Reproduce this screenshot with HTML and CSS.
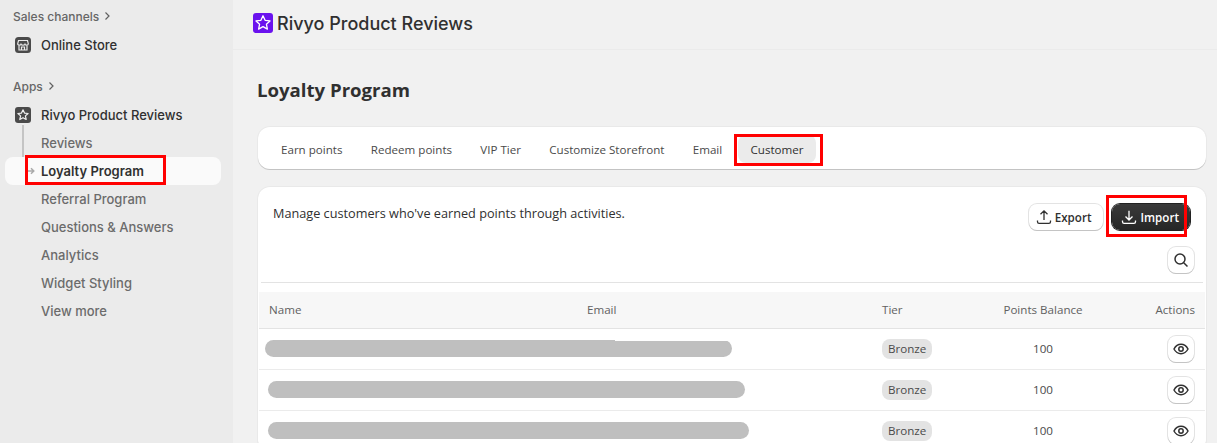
FILE: index.html
```html
<!DOCTYPE html>
<html lang="en">
<head>
    <meta charset="UTF-8">
    <title>Loyalty Program - Rivyo Product Reviews</title>
    <link rel="stylesheet" href="styles.css">
</head>
<body>
    <div class="app">
        <!-- Sidebar -->
        <nav class="sidebar">
            <div class="nav-label nav-label-first">Sales channels
                <svg class="chevron" viewBox="0 0 8 10"><path d="M2.500 1.500 6 5 2.500 8.500"/></svg>
            </div>
            <div class="nav-item nav-parent">
                <svg class="nav-icon" viewBox="0 0 16 16">
                    <rect width="16" height="16" rx="3.500" fill="#4a4a4a"/>
                    <path d="M3.500 3.500h9l.8 3.200c0 1-.9 1.500-1.700 1.500-.8 0-1.300-.4-1.600-1-.3.600-1.100 1-2 1s-1.700-.4-2-1c-.3.600-.8 1-1.600 1-.8 0-1.700-.5-1.700-1.500z" fill="none" stroke="#ebebeb" stroke-width="1.200"/>
                    <path d="M4 8.500V13h8V8.500M6.500 13v-3h3v3" fill="none" stroke="#ebebeb" stroke-width="1.200"/>
                </svg>
                Online Store
            </div>

            <div class="nav-label nav-label-apps">Apps
                <svg class="chevron" viewBox="0 0 8 10"><path d="M2.500 1.500 6 5 2.500 8.500"/></svg>
            </div>
            <div class="nav-item nav-parent">
                <svg class="nav-icon" viewBox="0 0 16 16">
                    <rect width="16" height="16" rx="3" fill="#4a4a4a"/>
                    <path d="M8 2.800l1.500 3.300 3.600.4-2.700 2.400.8 3.600L8 10.700l-3.200 1.800.8-3.600-2.700-2.400 3.600-.4z" fill="none" stroke="#f1f1f1" stroke-width="1.200" stroke-linejoin="round"/>
                </svg>
                Rivyo Product Reviews
            </div>
            <div class="nav-sub">
                <span class="tree-line"></span>
                <div class="nav-item">Reviews</div>
                <div class="nav-item nav-active">
                    <svg class="tree-arrow" viewBox="0 0 8 8"><path d="M.5 4h6M4 1.200 6.800 4 4 6.800"/></svg>
                    Loyalty Program
                </div>
                <div class="nav-item">Referral Program</div>
                <div class="nav-item">Questions &amp; Answers</div>
                <div class="nav-item">Analytics</div>
                <div class="nav-item">Widget Styling</div>
                <div class="nav-item">View more</div>
            </div>
            <span class="mark mark-nav"></span>
        </nav>

        <!-- Main -->
        <div class="main">
            <header class="topbar">
                <svg class="app-logo" viewBox="0 0 20 20">
                    <rect width="20" height="20" rx="3" fill="#6a12ee"/>
                    <path d="M10 2.800l2.100 4.500 4.900.6-3.600 3.300 1 4.900-4.400-2.500-4.400 2.500 1-4.900L3 7.900l4.900-.6z" fill="none" stroke="#fff" stroke-width="1.300" stroke-linejoin="round"/>
                </svg>
                <span class="app-name">Rivyo Product Reviews</span>
            </header>

            <div class="content">
                <h1>Loyalty Program</h1>

                <div class="card tabs">
                    <a class="tab">Earn points</a>
                    <a class="tab">Redeem points</a>
                    <a class="tab">VIP Tier</a>
                    <a class="tab">Customize Storefront</a>
                    <a class="tab">Email</a>
                    <a class="tab tab-active">Customer
                        <span class="mark mark-tab"></span>
                    </a>
                </div>

                <div class="card customers">
                    <div class="card-head">
                        <p class="card-text">Manage customers who've earned points through activities.</p>
                        <div class="actions">
                            <button class="btn">
                                <svg class="btn-icon" viewBox="0 0 16 16"><path d="M8 11V2M4.500 5.300 8 1.800l3.500 3.500M1.500 11.500v1.200c0 .9.700 1.600 1.600 1.600h9.800c.9 0 1.600-.7 1.600-1.600v-1.200"/></svg>
                                Export
                            </button>
                            <button class="btn btn-dark">
                                <svg class="btn-icon" viewBox="0 0 16 16"><path d="M8 1.800v9M4.500 7.500 8 11l3.500-3.500M1.500 11.500v1.200c0 .9.700 1.600 1.600 1.600h9.800c.9 0 1.600-.7 1.600-1.600v-1.200"/></svg>
                                Import
                                <span class="mark mark-import"></span>
                            </button>
                        </div>
                    </div>
                    <div class="search-row">
                        <button class="btn btn-square">
                            <svg class="square-icon" viewBox="0 0 16 16"><circle cx="7" cy="7" r="5"/><path d="M10.700 10.700 14.500 14.500"/></svg>
                        </button>
                    </div>
                    <div class="divider"></div>

                    <table class="data-table">
                        <colgroup>
                            <col class="col-name"><col class="col-email"><col class="col-tier"><col class="col-points"><col>
                        </colgroup>
                        <thead>
                            <tr>
                                <th>Name</th>
                                <th>Email</th>
                                <th>Tier</th>
                                <th class="cell-center">Points Balance</th>
                                <th class="cell-right">Actions</th>
                            </tr>
                        </thead>
                        <tbody>
                            <tr>
                                <td colspan="2" class="cell-hidden">
                                    <div class="redact redact-1">
                                        <span></span><span></span><span></span><span class="redact-low"></span>
                                    </div>
                                </td>
                                <td><span class="badge">Bronze</span></td>
                                <td class="cell-center">100</td>
                                <td class="cell-right"><button class="btn btn-square"><svg class="square-icon" viewBox="0 0 16 16"><path d="M1 8c1.600-3 4-4.700 7-4.700S13.400 5 15 8c-1.600 3-4 4.700-7 4.700S2.600 11 1 8z"/><circle cx="8" cy="8" r="2.200"/></svg></button></td>
                            </tr>
                            <tr>
                                <td colspan="2" class="cell-hidden"><div class="redact redact-2"></div></td>
                                <td><span class="badge">Bronze</span></td>
                                <td class="cell-center">100</td>
                                <td class="cell-right"><button class="btn btn-square"><svg class="square-icon" viewBox="0 0 16 16"><path d="M1 8c1.600-3 4-4.700 7-4.700S13.400 5 15 8c-1.600 3-4 4.700-7 4.700S2.600 11 1 8z"/><circle cx="8" cy="8" r="2.200"/></svg></button></td>
                            </tr>
                            <tr>
                                <td colspan="2" class="cell-hidden"><div class="redact redact-3"></div></td>
                                <td><span class="badge">Bronze</span></td>
                                <td class="cell-center">100</td>
                                <td class="cell-right"><button class="btn btn-square"><svg class="square-icon" viewBox="0 0 16 16"><path d="M1 8c1.600-3 4-4.700 7-4.700S13.400 5 15 8c-1.600 3-4 4.700-7 4.700S2.600 11 1 8z"/><circle cx="8" cy="8" r="2.200"/></svg></button></td>
                            </tr>
                        </tbody>
                    </table>
                </div>
            </div>
        </div>
    </div>
</body>
</html>
```

FILE: styles.css
```css
* {
    box-sizing: border-box;
    margin: 0;
    padding: 0;
}

html, body {
    height: 100%;
    overflow: hidden;
}

body {
    font-family: "Open Sans", "Noto Sans", sans-serif;
    font-size: 11.6px;
    background: #f1f1f1;
    color: #303030;
}

.app {
    display: flex;
    height: 100vh;
}

/* Sidebar */
.sidebar {
    position: relative;
    flex: 0 0 233px;
    background: #ebebeb;
    font-family: Inter, sans-serif;
    font-size: 13px;
    font-weight: 500;
    color: #303030;
}

.nav-label {
    display: flex;
    align-items: center;
    gap: 4px;
    height: 20px;
    padding-left: 13px;
    font-size: 12px;
    color: #666;
}

.nav-label-first {
    margin-top: 6px;
}

.nav-label-apps {
    margin-top: 17px;
}

.chevron {
    width: 8px;
    height: 10px;
    fill: none;
    stroke: #616161;
    stroke-width: 1.200;
}

.nav-item {
    position: relative;
    display: flex;
    align-items: center;
    height: 28px;
    padding-left: 41px;
    color: #6b6b6b;
}

.nav-parent {
    color: #303030;
    gap: 10px;
    padding-left: 15px;
    margin-top: 5px;
}

.nav-icon {
    width: 16px;
    height: 16px;
    flex: none;
}

.nav-sub {
    position: relative;
}

.tree-line {
    position: absolute;
    left: 22px;
    top: -4px;
    width: 2px;
    height: 47px;
    background: #c4c4c4;
}

.nav-active {
    margin: 0 12px 0 5px;
    padding-left: 36px;
    border-radius: 8px;
    background: #fafafa;
    color: #303030;
    font-weight: 600;
}

.tree-arrow {
    position: absolute;
    left: 22px;
    top: 10px;
    width: 8px;
    height: 8px;
    fill: none;
    stroke: #aaa;
    stroke-width: 1.500;
}

/* Red annotation boxes */
.mark {
    position: absolute;
    border: 3px solid #f00;
    pointer-events: none;
}

.mark-nav {
    left: 25px;
    top: 155px;
    width: 141px;
    height: 30px;
}

.mark-tab {
    left: -4px;
    top: -1px;
    width: 89px;
    height: 32px;
}

.mark-import {
    left: -6px;
    top: -9px;
    width: 81px;
    height: 42px;
}

/* Main */
.main {
    flex: 1;
    min-width: 0;
}

.topbar {
    display: flex;
    align-items: center;
    gap: 4px;
    height: 50px;
    padding: 0 0 3px 20px;
    border-bottom: 1px solid #ebebeb;
}

.app-logo {
    width: 20px;
    height: 20px;
}

.app-name {
    font-family: Inter, sans-serif;
    font-size: 18px;
    font-weight: 500;
}

.content {
    padding: 26px 11px 0 25px;
}

h1 {
    margin: 0 0 24px -1px;
    font-size: 18.6px;
    font-weight: 700;
    line-height: 27px;
}

.card {
    background: #fff;
    border-radius: 12px;
    box-shadow: 0 1px 0 rgba(0, 0, 0, 0.16), 0 0 0 1px rgba(0, 0, 0, 0.03);
}

.tabs {
    display: flex;
    gap: 4.25px;
    align-items: center;
    height: 42px;
    padding: 2px 0 0 11px;
    margin-bottom: 18px;
}

.tab {
    position: relative;
    padding: 1px 12px 0;
    line-height: 27px;
    border-radius: 8px;
    font-weight: 500;
    color: #4a4a4a;
}

.tab-active {
    background: #ebebeb;
    color: #303030;
}

.customers {
    padding: 0 1px;
}

.card-head {
    display: flex;
    justify-content: space-between;
    padding: 16px 15px 0 14px;
}

.card-text {
    margin-top: 1px;
    font-size: 12.7px;
    font-weight: 500;
    line-height: 18px;
}

.actions {
    display: flex;
    gap: 9px;
    padding-top: 1px;
}

.btn {
    position: relative;
    display: flex;
    align-items: center;
    gap: 3px;
    height: 26px;
    padding: 0 11px 0 7px;
    border: 0;
    border-radius: 8px;
    background: #fff;
    color: #303030;
    font-family: inherit;
    font-size: 11.6px;
    font-weight: 600;
    box-shadow: 0 1px 0 #c4c4c4, 0 0 0 1px #e3e3e3;
}

.btn-dark {
    gap: 4px;
    padding-left: 9px;
    background: linear-gradient(#3a3a3a, #262626);
    color: #fff;
    box-shadow: 0 0 0 1px #222;
}

.btn-icon {
    width: 16px;
    height: 16px;
    fill: none;
    stroke: currentColor;
    stroke-width: 1.300;
}

.btn-square {
    width: 26px;
    height: 26px;
    padding: 0;
    justify-content: center;
}

.square-icon {
    width: 16px;
    height: 16px;
    fill: none;
    stroke: #303030;
    stroke-width: 1.500;
}

.search-row {
    display: flex;
    justify-content: flex-end;
    padding: 17px 11px 0 0;
}

.divider {
    height: 1px;
    margin: 9px 2px 0;
    background: #e3e3e3;
}

/* Table */
.data-table {
    width: 100%;
    margin-top: 9px;
    border-collapse: collapse;
    table-layout: fixed;
}

.col-name { width: 318px; }
.col-email { width: 296px; }
.col-tier { width: 110px; }
.col-points { width: 120px; }

.data-table th,
.data-table td {
    padding: 0 10px;
    text-align: left;
    color: #4a4a4a;
}

.data-table th {
    height: 36px;
    background: #f7f7f7;
    border-bottom: 1px solid #e3e3e3;
    font-weight: 500;
    color: #616161;
}

.data-table td {
    height: 41px;
    border-bottom: 1px solid #ebebeb;
}

.data-table th:nth-child(3),
.data-table td:nth-child(2) {
    padding-left: 9px;
}

.data-table .cell-center {
    text-align: center;
}

.data-table .cell-right {
    text-align: right;
}

.data-table td.cell-right {
    padding-right: 11px;
}

.cell-right .btn {
    margin-left: auto;
}

.data-table .cell-hidden {
    padding-left: 6px;
}

.redact {
    height: 17px;
    border-radius: 9px;
    background: #bfbfbf;
}

.redact-1 {
    display: flex;
    width: 467px;
    background: none;
    overflow: hidden;
}

.redact-1 span {
    flex: 1;
    height: 17px;
    background: #bfbfbf;
}

.redact-1 .redact-low {
    margin-top: 1px;
}

.redact-2 {
    width: 477px;
    margin-left: 3px;
}

.redact-3 {
    width: 481px;
    margin-left: 3px;
}

.badge {
    display: inline-block;
    padding: 0 6px;
    line-height: 20px;
    border-radius: 8px;
    background: #e3e3e3;
    color: #4a4a4a;
}
```
